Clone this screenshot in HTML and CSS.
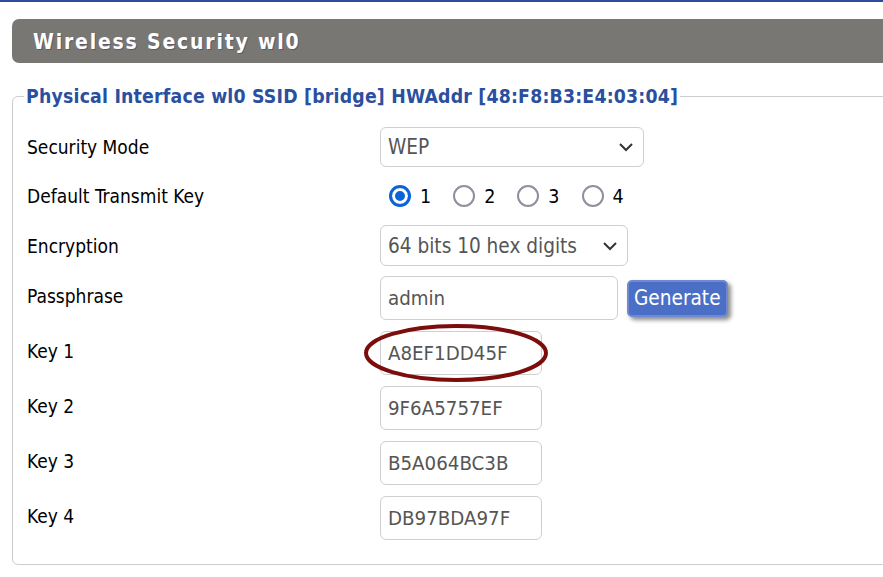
FILE: index.html
```html
<!DOCTYPE html>
<html>
<head>
<meta charset="utf-8">
<link rel="stylesheet" href="styles.css">
</head>
<body>
<div class="topline"></div>
<div class="page">
  <h2 class="title">Wireless Security wl0</h2>
  <fieldset class="panel">
    <legend class="legend">Physical Interface wl0 SSID [bridge] HWAddr [48:F8:B3:E4:03:04]</legend>
    <div class="form">
      <div class="row row-mode">
        <div class="label">Security Mode</div>
        <div class="select select-mode">
          <span class="select-text">WEP</span>
          <svg class="chev" width="16" height="10" viewBox="0 0 16 10"><path d="M2 2 L8 8 L14 2" fill="none" stroke="#333" stroke-width="2"/></svg>
        </div>
      </div>
      <div class="row row-radio">
        <div class="label">Default Transmit Key</div>
        <div class="radios">
          <label class="radio"><span class="dot checked"></span><span class="rtext">1</span></label>
          <label class="radio"><span class="dot"></span><span class="rtext">2</span></label>
          <label class="radio"><span class="dot"></span><span class="rtext">3</span></label>
          <label class="radio"><span class="dot"></span><span class="rtext">4</span></label>
        </div>
      </div>
      <div class="row row-enc">
        <div class="label">Encryption</div>
        <div class="select select-enc">
          <span class="select-text">64 bits 10 hex digits</span>
          <svg class="chev" width="16" height="10" viewBox="0 0 16 10"><path d="M2 2 L8 8 L14 2" fill="none" stroke="#333" stroke-width="2"/></svg>
        </div>
      </div>
      <div class="row row-input">
        <div class="label lift">Passphrase</div>
        <div class="field field-pass">admin</div>
        <button class="btn">Generate</button>
      </div>
      <div class="row row-input">
        <div class="label lift">Key 1</div>
        <div class="key-wrap">
          <div class="field field-key">A8EF1DD45F</div>
          <svg class="ring" width="186" height="60" viewBox="0 0 186 60"><ellipse cx="93" cy="30" rx="90" ry="27" fill="none" stroke="#7b0d0d" stroke-width="4"/></svg>
        </div>
      </div>
      <div class="row row-input">
        <div class="label lift">Key 2</div>
        <div class="field field-key">9F6A5757EF</div>
      </div>
      <div class="row row-input">
        <div class="label lift">Key 3</div>
        <div class="field field-key">B5A064BC3B</div>
      </div>
      <div class="row row-input">
        <div class="label lift">Key 4</div>
        <div class="field field-key">DB97BDA97F</div>
      </div>
    </div>
  </fieldset>
</div>
</body>
</html>
```
FILE: styles.css
```css
html, body {
  margin: 0;
  padding: 0;
  background: #ffffff;
  overflow: hidden;
}
body {
  font-family: "DejaVu Sans Condensed", "DejaVu Sans", sans-serif;
  color: #000;
}
.topline {
  height: 2px;
  background: #2d4b9c;
}
.page {
  padding: 17px 0 0 12px;
}
.title {
  margin: 0 -20px 0 0;
  height: 44px;
  box-sizing: border-box;
  background: #797774;
  border-radius: 7px;
  color: #fff;
  font-size: 21px;
  font-weight: bold;
  letter-spacing: 1.8px;
  line-height: 46px;
  padding-left: 21px;
  text-shadow: 1px 1px 0 rgba(60,60,90,0.5);
}
.panel {
  margin: 22px -20px 0 0;
  border: 1px solid #cccccc;
  border-radius: 6px;
  padding: 0 0 24px 11px;
  min-width: 0;
}
.legend {
  padding: 0 2px;
  color: #2b4f9f;
  font-weight: bold;
  font-size: 19.3px;
  letter-spacing: 0.2px;
}
.form {
  display: flex;
  flex-direction: column;
  padding-top: 19px;
}
.row {
  display: flex;
  align-items: center;
}
.label {
  width: 353px;
  padding-left: 3px;
  font-size: 19px;
}
.label.lift {
  margin-bottom: 5px;
}
.row-mode { height: 40px; }
.row-radio { height: 58px; }
.row-enc { height: 41px; }
.row-input { height: 44px; margin-top: 11px; }
.row-enc + .row-input { margin-top: 10px; }
.select {
  box-sizing: border-box;
  height: 100%;
  border: 1px solid #cfcfcf;
  border-radius: 6px;
  display: flex;
  align-items: center;
  justify-content: space-between;
  padding: 0 9px 0 7px;
  color: #555;
  font-size: 20.6px;
  background: #fff;
}
.select-mode { width: 264px; }
.select-enc { width: 248px; }
.chev { flex: none; }
.radios {
  display: flex;
  align-items: center;
  gap: 22px;
  padding-left: 9px;
}
.radio {
  display: flex;
  align-items: center;
  gap: 9px;
  font-size: 19.5px;
}
.dot {
  box-sizing: border-box;
  width: 22px;
  height: 22px;
  border-radius: 50%;
  border: 2.5px solid #8f8f9d;
  background: #fff;
}
.dot.checked {
  border: 3px solid #0b63d8;
  box-shadow: inset 0 0 0 3px #fff, inset 0 0 0 11px #0b63d8;
}
.field {
  box-sizing: border-box;
  height: 44px;
  border: 1px solid #cfcfcf;
  border-radius: 6px;
  display: flex;
  align-items: center;
  padding-left: 7px;
  color: #555;
  font-size: 20.3px;
  background: #fff;
}
.field-pass { width: 238px; }
.field-key { width: 162px; }
.btn {
  margin-left: 9px;
  height: 37px;
  padding: 0 5px;
  background: #4b6fc6;
  color: #fff;
  border: 2px solid #6f8ad3;
  border-radius: 5px;
  font-family: inherit;
  font-size: 20.6px;
  box-shadow: 3px 3px 4px rgba(0,0,0,0.45);
}
.key-wrap {
  position: relative;
}
.ring {
  position: absolute;
  left: -17px;
  top: -8px;
  pointer-events: none;
}
```
